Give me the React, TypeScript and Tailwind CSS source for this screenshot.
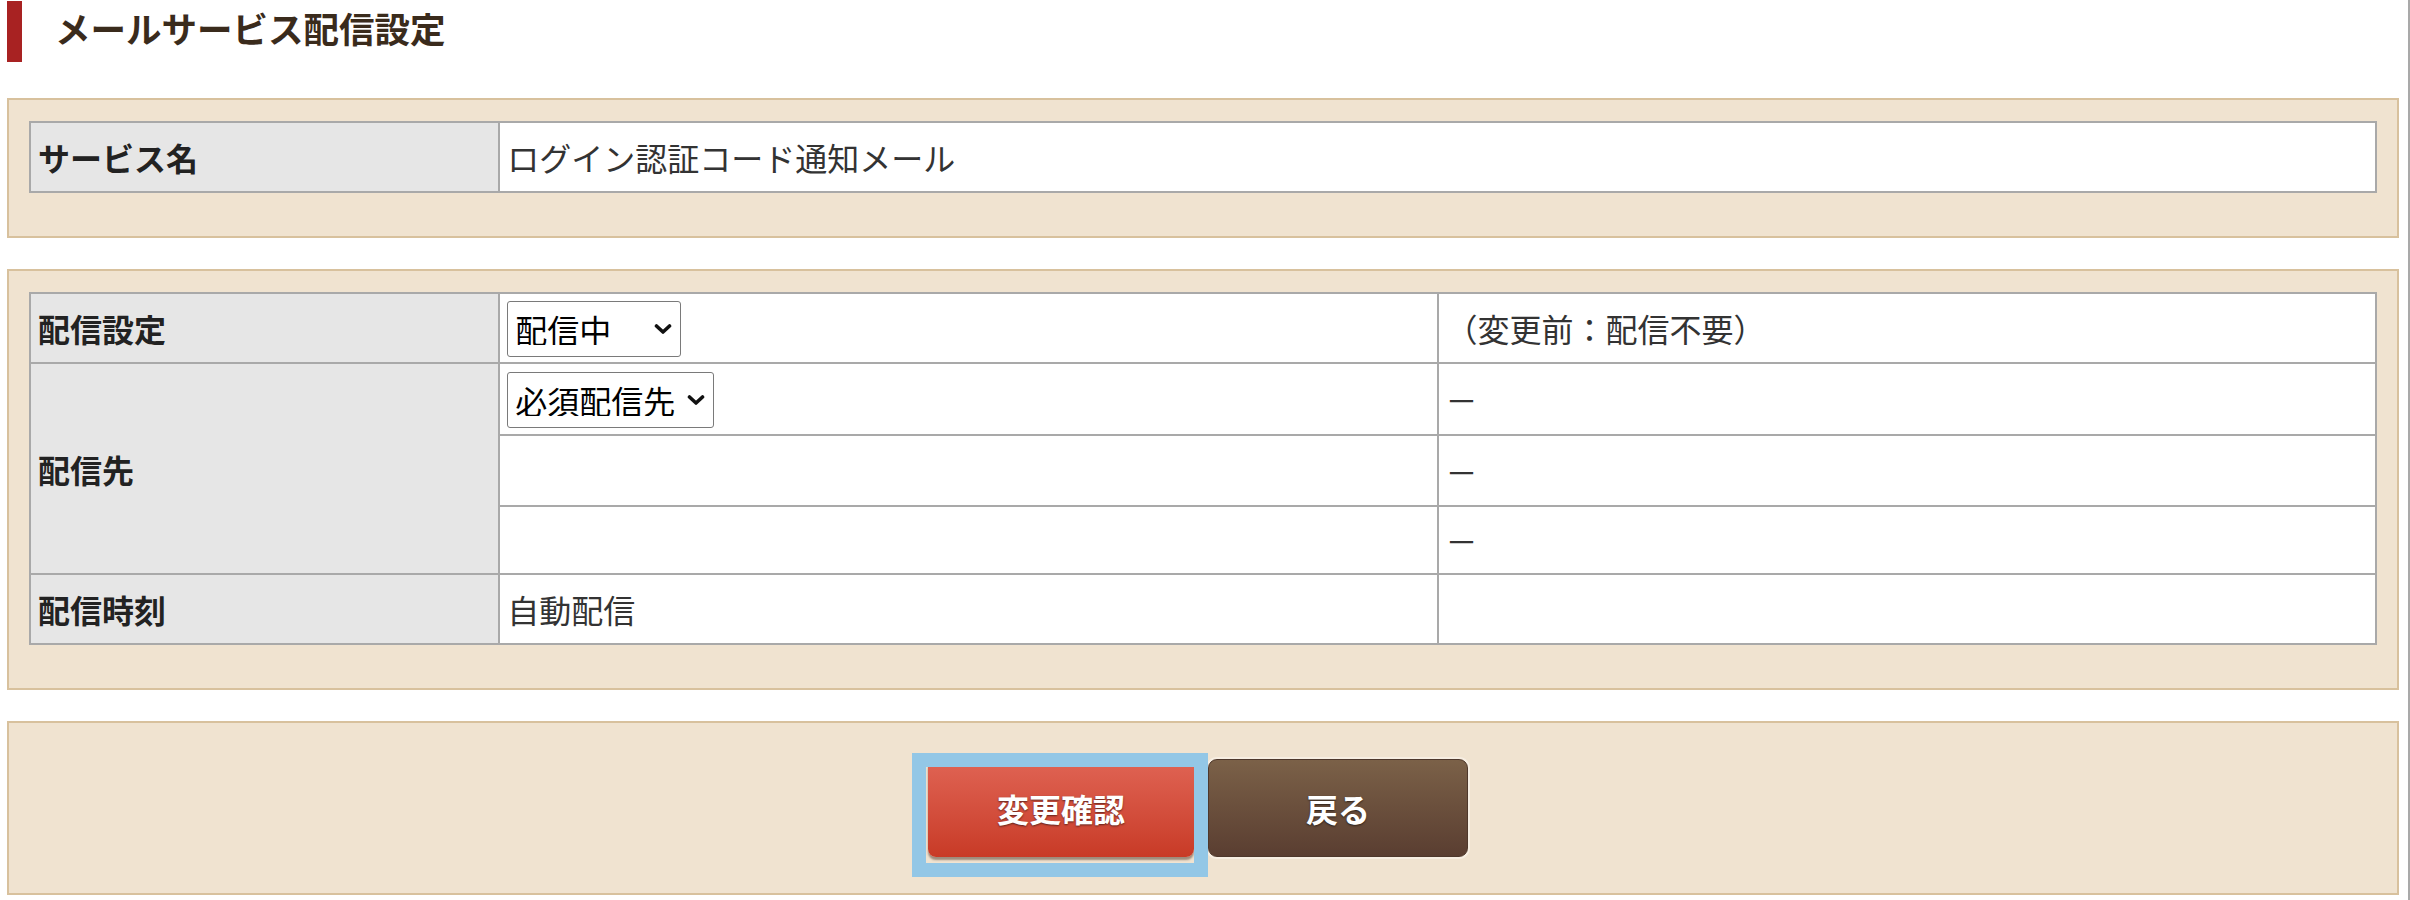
import React from "react";

const cellBorder = "border-2 border-[#a9a9a9]";
const th = `${cellBorder} bg-[#e6e6e6] px-[7px] text-left align-middle font-bold text-[#222]`;
const td = `${cellBorder} bg-white px-[7px] align-middle font-normal text-[#333]`;

function Chevron() {
  return (
    <svg
      className="pointer-events-none absolute right-[9px] top-1/2 -translate-y-1/2"
      width="18"
      height="11"
      viewBox="0 0 18 11"
      fill="none"
    >
      <path d="M2.5 2.5 L9 8.5 L15.5 2.5" stroke="#111" strokeWidth="3.6" strokeLinecap="round" strokeLinejoin="round" />
    </svg>
  );
}

function Select({ value, options, width }: { value: string; options: string[]; width: string }) {
  return (
    <div className={`relative inline-block align-middle ${width}`}>
      <select
        defaultValue={value}
        className="h-[56px] w-full appearance-none rounded-[3px] border-[1.5px] border-[#7a7a7a] bg-white pl-[7px] pr-[30px] text-[32px] leading-none text-black outline-none"
      >
        {options.map((o) => (
          <option key={o}>{o}</option>
        ))}
      </select>
      <Chevron />
    </div>
  );
}

function Panel({ children }: { children: React.ReactNode }) {
  return (
    <div className="border-2 border-[#d8c19d] bg-[#f0e3d0] px-[20px] pt-[21px] pb-[43px]">{children}</div>
  );
}

export default function App() {
  return (
    <div
      className="min-h-[900px] w-full border-r-2 border-[#a9a9a9] bg-white pl-[7px] pr-[9px] text-[32px] leading-normal"
      style={{ fontFamily: '"Noto Sans CJK JP", "Noto Sans", sans-serif' }}
    >
      {/* page title */}
      <div className="flex h-[62px] items-center">
        <div className="mt-[1px] h-[61px] w-[15px] bg-[#a82222]" />
        <h1 className="ml-[33px] -mt-[6px] text-[35.5px] font-bold tracking-normal text-[#3a2b1c]">
          メールサービス配信設定
        </h1>
      </div>

      <div className="mt-[36px]">
        <Panel>
          <table className={`w-full table-fixed border-collapse ${cellBorder}`}>
            <colgroup>
              <col className="w-[20%]" />
              <col />
            </colgroup>
            <tbody>
              <tr className="h-[70px]">
                <th className={th}>サービス名</th>
                <td className={td}>ログイン認証コード通知メール</td>
              </tr>
            </tbody>
          </table>
        </Panel>
      </div>

      <div className="mt-[31px]">
        <Panel>
          <table className={`w-full table-fixed border-collapse ${cellBorder}`}>
            <colgroup>
              <col className="w-[20%]" />
              <col className="w-[40%]" />
              <col className="w-[40%]" />
            </colgroup>
            <tbody>
              <tr className="h-[70px]">
                <th className={th}>配信設定</th>
                <td className={td}>
                  <Select value="配信中" options={["配信中", "配信停止"]} width="w-[174px]" />
                </td>
                <td className={td}>（変更前：配信不要）</td>
              </tr>
              <tr className="h-[72px]">
                <th className={th} rowSpan={3}>
                  配信先
                </th>
                <td className={td}>
                  <Select value="必須配信先" options={["必須配信先", "任意配信先"]} width="w-[207px]" />
                </td>
                <td className={td}>－</td>
              </tr>
              <tr className="h-[71px]">
                <td className={td}></td>
                <td className={td}>－</td>
              </tr>
              <tr className="h-[68px]">
                <td className={td}></td>
                <td className={td}>－</td>
              </tr>
              <tr className="h-[70px]">
                <th className={th}>配信時刻</th>
                <td className={td}>自動配信</td>
                <td className={td}></td>
              </tr>
            </tbody>
          </table>
        </Panel>
      </div>

      {/* actions */}
      <div className="mt-[31px] flex h-[174px] items-center justify-center gap-[14px] border-2 border-[#d8c19d] bg-[#f0e3d0] pr-[10px]">
        <div className="relative">
          <button className="flex h-[98px] w-[266px] items-center justify-center rounded-[8px] bg-gradient-to-b from-[#e06454] to-[#c83a26] text-[32px] font-bold text-white shadow-[0_3px_2px_rgba(60,30,20,0.45)] [text-shadow:0_1px_2px_rgba(0,0,0,0.55)]">
            変更確認
          </button>
          <div className="pointer-events-none absolute -top-[6px] -right-[14px] -bottom-[20px] -left-[16px] border-[14px] border-[#93c7e6]" />
        </div>
        <button className="flex h-[98px] w-[260px] items-center justify-center rounded-[9px] border border-[#4e382c] bg-gradient-to-b from-[#7b6148] to-[#5a3e31] text-[32px] font-bold text-white ring-2 ring-[#f7eee2] [text-shadow:0_1px_2px_rgba(0,0,0,0.6)]">
          戻る
        </button>
      </div>
    </div>
  );
}
